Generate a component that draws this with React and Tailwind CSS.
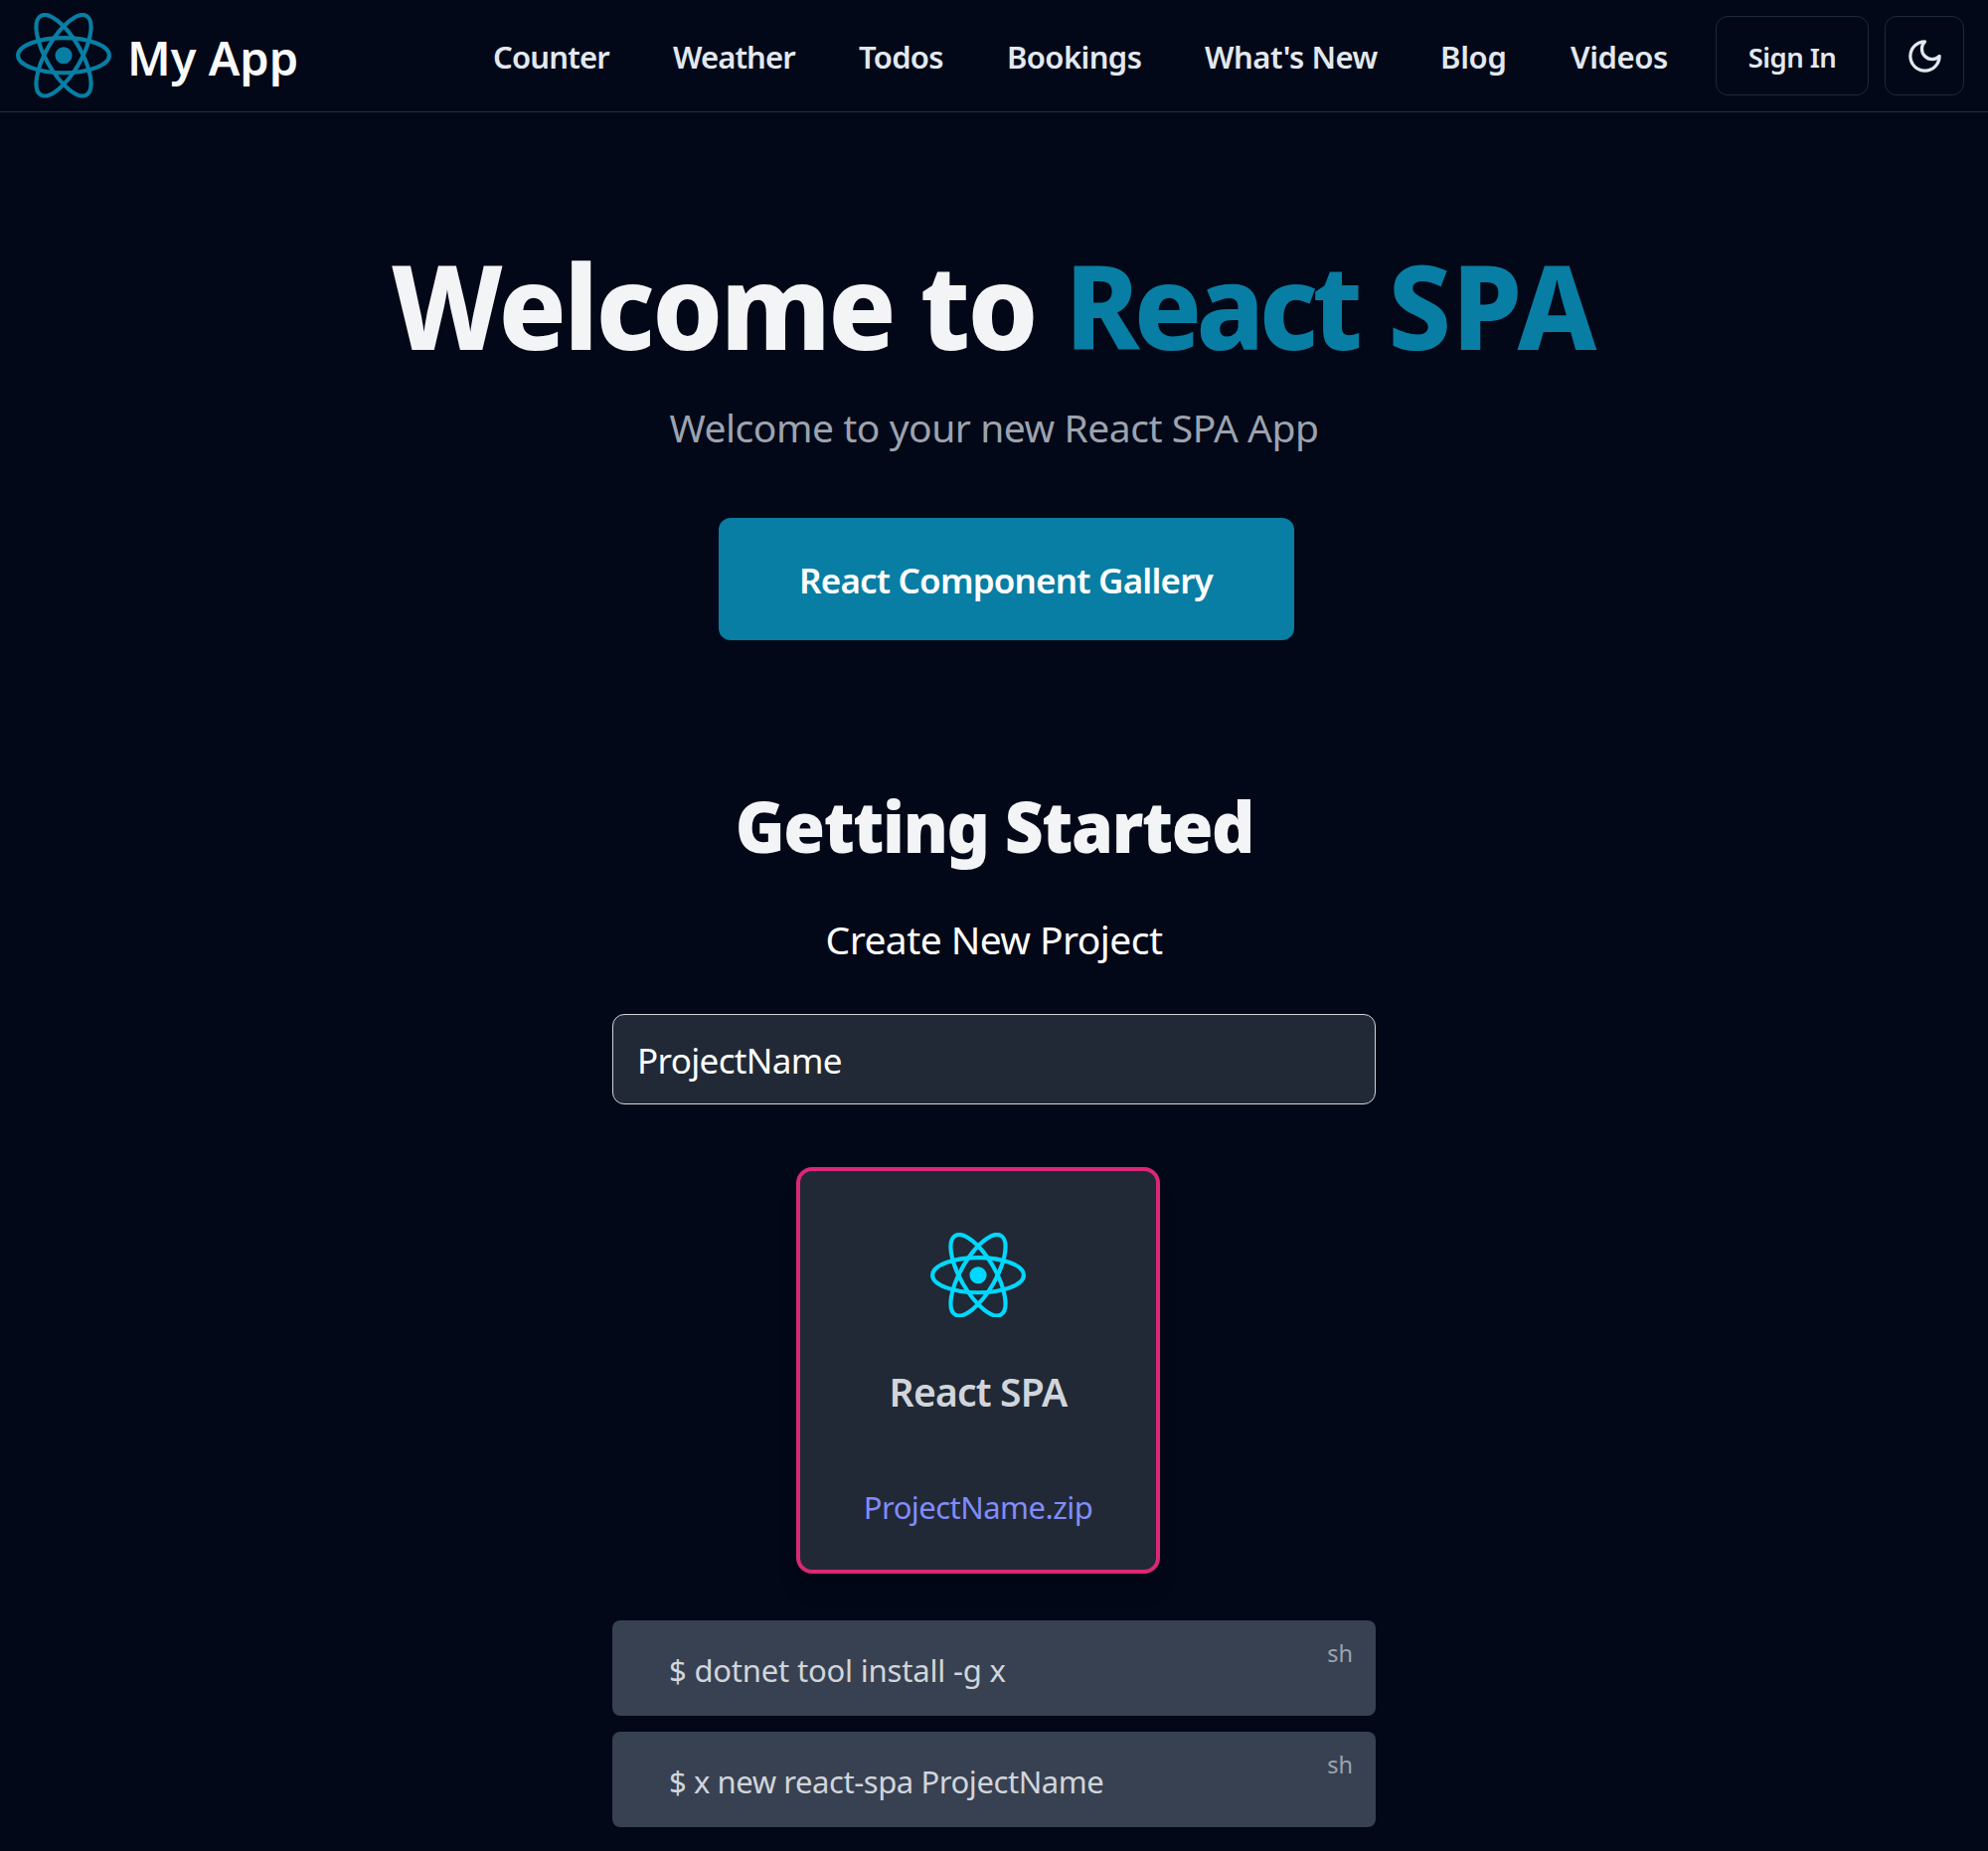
const NAV = [
  { label: "Counter", style: "w-[117px] tracking-[-0.83px]" },
  { label: "Weather", style: "w-[123px] tracking-[-0.92px]" },
  { label: "Todos", style: "w-[85px] tracking-[-0.72px]" },
  { label: "Bookings", style: "w-[135px] tracking-[-0.6px]" },
  { label: "What's New", style: "w-[173px] tracking-[-0.49px]" },
  { label: "Blog", style: "w-[67px] tracking-[-0.3px]" },
  { label: "Videos", style: "w-[98px] tracking-[-0.38px]" },
];

const COMMANDS = [
  { text: "$ dotnet tool install -g x", style: "tracking-[-0.19px]" },
  { text: "$ x new react-spa ProjectName", style: "tracking-[-0.43px]" },
];

function ReactLogo({ className }) {
  return (
    <svg viewBox="-11.5 -10.232 23 20.463" className={className} aria-hidden="true">
      <circle r="2.05" fill="currentColor" />
      <g fill="none" stroke="currentColor">
        <ellipse rx="11" ry="4.2" />
        <ellipse rx="11" ry="4.2" transform="rotate(60)" />
        <ellipse rx="11" ry="4.2" transform="rotate(120)" />
      </g>
    </svg>
  );
}

function MoonIcon() {
  return (
    <svg
      viewBox="0 0 24 24"
      className="mt-px ml-px size-[39px]"
      fill="none"
      stroke="currentColor"
      strokeWidth="2"
      strokeLinecap="round"
      strokeLinejoin="round"
      aria-hidden="true"
    >
      <path d="M12 3a6 6 0 0 0 9 9 9 9 0 1 1-9-9Z" />
    </svg>
  );
}

function Header() {
  return (
    <header className="flex h-[113px] items-center border-b border-[#232d3c] pl-4 pr-6">
      <a className="flex items-center" href="#">
        <ReactLogo className="w-24 text-[#087ea4]" />
        <span className="ml-4 mt-[4px] text-[47px] leading-[64px] font-[560] text-gray-50">
          My App
        </span>
      </a>
      <nav className="ml-auto mr-12 mt-[2px] flex gap-16 text-[31px] leading-[48px] font-[560] whitespace-nowrap">
        {NAV.map(({ label, style }) => (
          <a key={label} href="#" className={style}>
            {label}
          </a>
        ))}
      </nav>
      <div className="flex gap-4">
        <button className="flex h-20 w-[154px] items-center justify-center rounded-xl border border-[#1e293b] pt-[3px] text-[27.5px] font-[560] tracking-[-0.55px]">
          Sign In
        </button>
        <button aria-label="Toggle dark mode" className="flex size-20 items-center justify-center rounded-xl border border-[#1e293b]">
          <MoonIcon />
        </button>
      </div>
    </header>
  );
}

function Hero() {
  return (
    <section className="flex flex-col items-center pt-[134px]">
      <h1 className="flex origin-center scale-x-[0.955] text-[118px] leading-[120px] font-extrabold whitespace-nowrap text-[#f3f4f6]">
        <span className="tracking-[-2.7px]">Welcome to</span>
        <span className="ml-[31px] tracking-[-5.9px] text-[#087ea4]">React</span>
        <span className="ml-[33px] tracking-[0.8px] text-[#087ea4]">SPA</span>
      </h1>
      <p className="mt-[35px] text-[39px] leading-[56px] tracking-[-0.46px] text-[#9ca3af]">
        Welcome to your new React SPA App
      </p>
      <a
        href="#"
        className="mt-[63px] ml-6 flex h-[123px] w-[579px] items-center justify-center rounded-xl bg-[#087ea4] pt-[3px] text-[35px] font-[560] tracking-[-0.8px] text-white"
      >
        React Component Gallery
      </a>
    </section>
  );
}

function GettingStarted() {
  return (
    <section className="mx-auto flex w-3xl flex-col items-center pt-[147px]">
      <h2 className="scale-x-[0.95] text-[71px] leading-[80px] font-black tracking-[-1.4px] whitespace-nowrap text-[#f3f4f6]">
        Getting Started
      </h2>
      <p className="mt-[46px] text-[39px] leading-[56px] tracking-[-0.57px] text-white">Create New Project</p>
      <input
        defaultValue="ProjectName"
        className="mt-[47px] h-[91px] w-full rounded-xl border border-[#d1d5db] bg-[#212936] px-6 pt-[2px] text-[35px] tracking-[-0.65px] text-white"
      />
      <div className="mt-[63px] mr-8 flex h-[409px] w-[366px] flex-col items-center rounded-2xl border-4 border-[#db2777] bg-[#212936] pt-[62px] shadow-xl">
        <ReactLogo className="w-24 text-[#00d8ff]" />
        <h3 className="mt-[47px] text-[39px] leading-[56px] font-[560] tracking-[-0.8px] text-[#d1d5db]">React SPA</h3>
        <a href="#" className="mt-16 text-[31px] leading-[48px] tracking-[-0.55px] text-[#818cf8]">
          ProjectName.zip
        </a>
      </div>
      <div className="mt-[47px] flex w-full flex-col gap-4">
        {COMMANDS.map(({ text, style }) => (
          <div key={text} className="flex h-24 items-start justify-between rounded-lg bg-[#384151] pr-[23px] pl-[57px]">
            <code className={`mt-[26px] text-[31px] leading-[48px] text-[#d1d5db] ${style}`}>{text}</code>
            <span className="mt-[17px] text-[23.5px] leading-8 text-[#9ca3af]">sh</span>
          </div>
        ))}
      </div>
    </section>
  );
}

export default function App() {
  return (
    <div className="h-[1862px] overflow-hidden bg-[#020817] font-['Noto_Sans','Open_Sans',sans-serif] text-[#e2e8f0] [&_code]:font-['Noto_Sans','Open_Sans',sans-serif]">
      <Header />
      <main>
        <Hero />
        <GettingStarted />
      </main>
    </div>
  );
}
